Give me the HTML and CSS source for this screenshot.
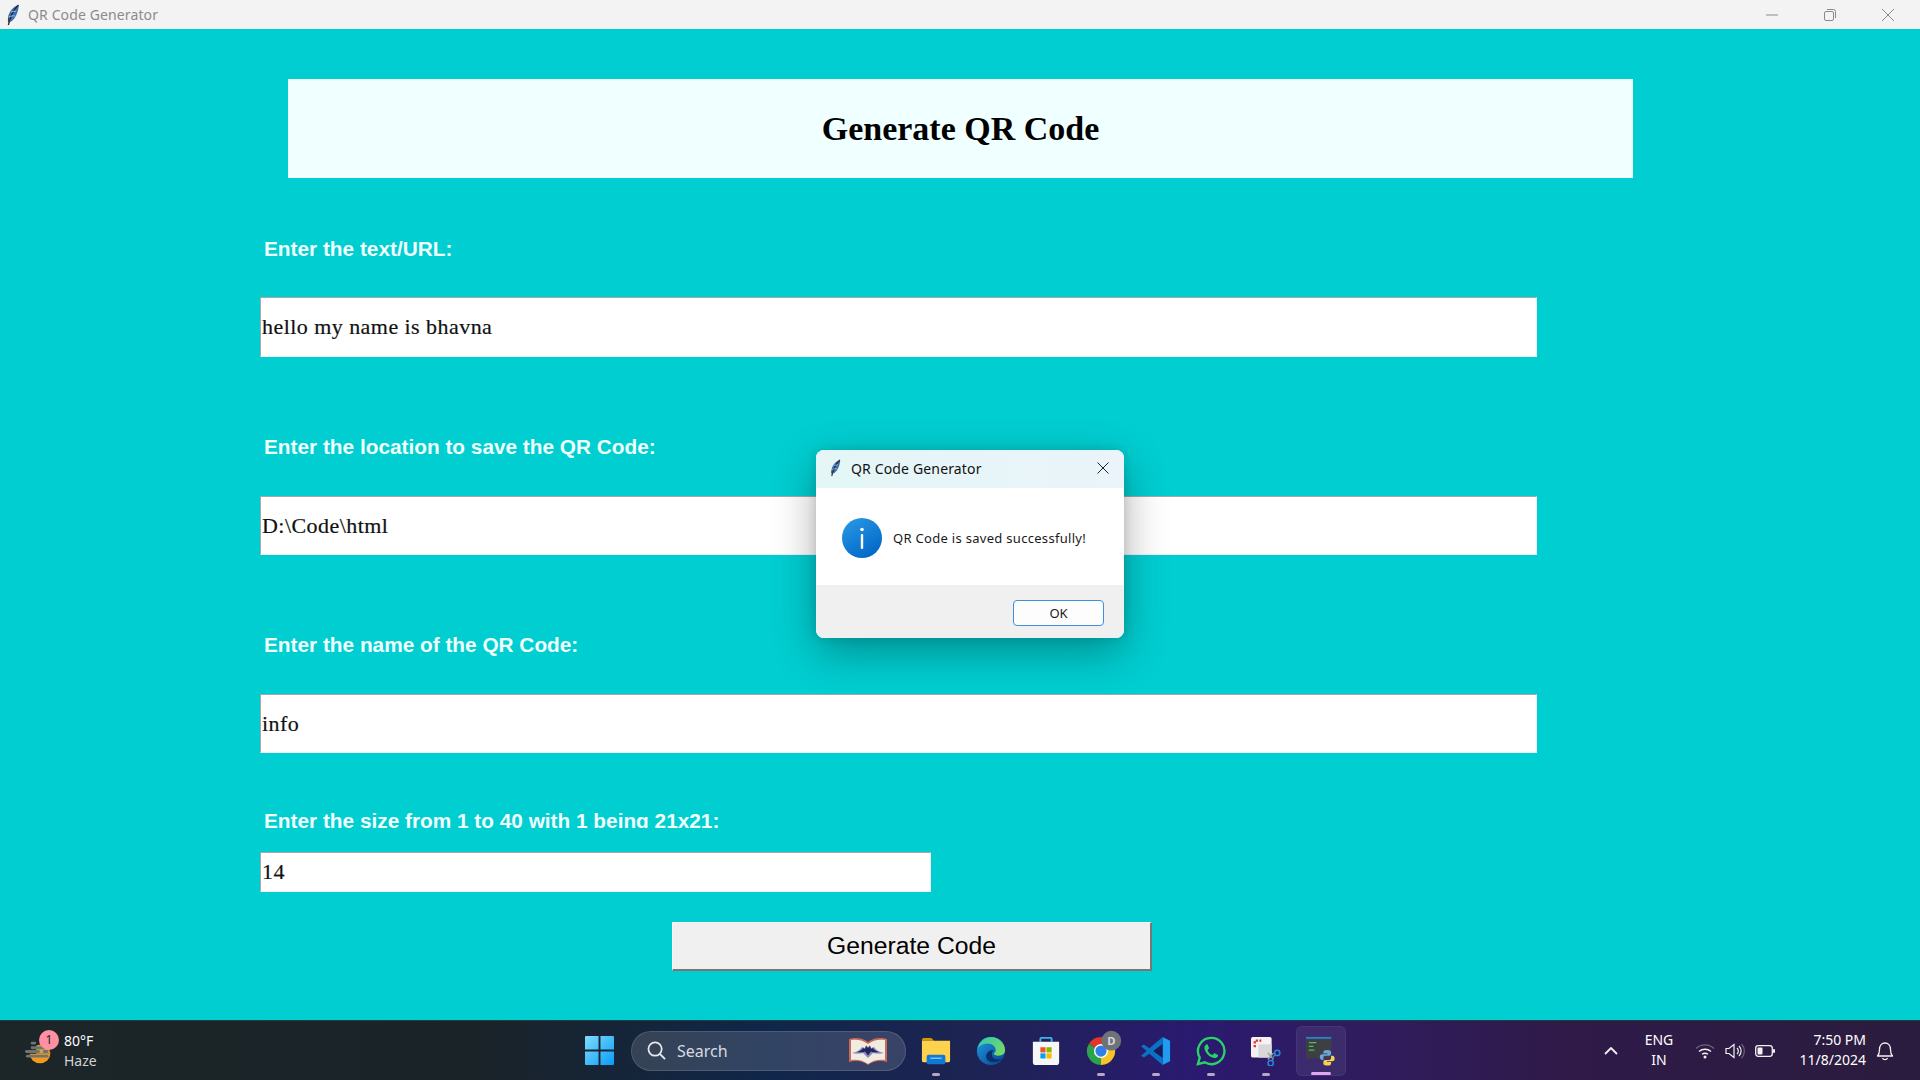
FILE: index.html
```html
<!DOCTYPE html>
<html lang="en">
<head>
<meta charset="utf-8">
<title>QR Code Generator</title>
<link rel="stylesheet" href="styles.css">
</head>
<body>
<svg class="defs" width="0" height="0">
  <defs>
    <symbol id="feather" viewBox="0 0 16 22">
      <path d="M13.5 1C8 2.500 3.500 8 3 14c-.2 2 0 3.500.6 4.500C8 17.500 11 13 12.500 8 13.300 5.500 14 3 13.500 1z" fill="#3f6fae"/>
      <path d="M13.500 1C9 5 5.500 11 3.400 21" fill="none" stroke="#1c2530" stroke-width="1.300"/>
      <path d="M4 13c2-1 4-1.500 6-1M6 8c1.500-.5 3-.8 5-.8" fill="none" stroke="#9cc0ea" stroke-width="1"/>
      <path d="M3 14c-.2 2 0 3.500.6 4.500L5 17C4.500 15 4 14 3 14z" fill="#444"/>
    </symbol>
  </defs>
</svg>

<header class="titlebar">
  <svg class="feather"><use href="#feather"/></svg>
  <span class="titlebar-text">QR Code Generator</span>
  <div class="wincontrols">
    <svg class="winbtn" viewBox="0 0 14 14"><path d="M1 7h12" stroke="#8a8a8a" fill="none"/></svg>
    <svg class="winbtn" viewBox="0 0 14 14"><rect x="1.500" y="3.500" width="9" height="9" rx="1.500" stroke="#8a8a8a" fill="none"/><path d="M4 1.500h6.500a2 2 0 0 1 2 2V10" stroke="#8a8a8a" fill="none"/></svg>
    <svg class="winbtn" viewBox="0 0 14 14"><path d="M1 1l12 12M13 1L1 13" stroke="#8a8a8a" fill="none"/></svg>
  </div>
</header>

<main class="app">
  <h1 class="banner">Generate QR Code</h1>
  <div class="label first">Enter the text/URL:</div>
  <div class="field tall-a">hello my name is bhavna</div>
  <div class="label">Enter the location to save the QR Code:</div>
  <div class="field tall-b">D:\Code\html</div>
  <div class="label">Enter the name of the QR Code:</div>
  <div class="field tall-b">info</div>
  <div class="label clipped">Enter the size from 1 to 40 with 1 being 21x21:</div>
  <div class="field short">14</div>
  <div class="generate">Generate Code</div>

  <section class="dialog">
    <div class="dialog-title">
      <svg class="dialog-feather"><use href="#feather"/></svg>
      <span class="dialog-title-text">QR Code Generator</span>
      <svg class="dialog-close" viewBox="0 0 12 12"><path d="M.5.500l11 11M11.500.500l-11 11" stroke="#222" fill="none" stroke-width="1"/></svg>
    </div>
    <div class="dialog-body">
      <svg class="info" viewBox="0 0 40 40">
        <defs><linearGradient id="infog" x1="0" y1="0" x2="0.600" y2="1"><stop offset="0" stop-color="#2b9be6"/><stop offset="1" stop-color="#0369c9"/></linearGradient></defs>
        <circle cx="20" cy="20" r="20" fill="url(#infog)"/>
        <rect x="18.800" y="16" width="2.400" height="15" rx="1" fill="#fff"/>
        <circle cx="20" cy="11.500" r="1.800" fill="#fff"/>
      </svg>
      <span class="dialog-msg">QR Code is saved successfully!</span>
    </div>
    <div class="dialog-foot"><div class="ok">OK</div></div>
  </section>
</main>

<footer class="taskbar">
  <div class="widget">
    <div class="weather">
      <svg class="weather-icon" viewBox="0 0 32 32">
        <path d="M5 19a11 10 0 0 0 22 0z" fill="#f39a1c"/>
        <path d="M12 10a11 10 0 0 1 15 9H12z" fill="#d9a13a"/>
        <g fill="#6f7472"><rect x="6" y="6" width="6" height="3" rx="1.500"/><rect x="6" y="11" width="16" height="3" rx="1.500"/><rect x="0" y="15" width="16" height="3" rx="1.500"/><rect x="19" y="15" width="6" height="3" rx="1.500"/><rect x="1" y="20" width="24" height="3" rx="1.500"/></g>
      </svg>
      <span class="weather-badge">1</span>
    </div>
    <div class="weather-text"><span class="temp">80°F</span><span class="cond">Haze</span></div>
  </div>

  <div class="center">
    <svg class="startlogo" viewBox="0 0 30 30">
      <defs><linearGradient id="wing" x1="0" y1="0" x2="1" y2="1"><stop offset="0" stop-color="#7fdcff"/><stop offset="1" stop-color="#0a9bf5"/></linearGradient></defs>
      <path fill="url(#wing)" d="M1 0h13v14H0V1a1 1 0 0 1 1-1zM16 0h13a1 1 0 0 1 1 1v13H16zM0 16h14v14H1a1 1 0 0 1-1-1zM16 16h14v13a1 1 0 0 1-1 1H16z"/>
    </svg>
    <div class="search">
      <svg class="search-icon" viewBox="0 0 20 20"><circle cx="8.500" cy="8.500" r="7" fill="none" stroke="#e8e8ee" stroke-width="1.800"/><path d="M13.500 13.500l5.500 5.500" stroke="#e8e8ee" stroke-width="2"/></svg>
      <span class="search-text">Search</span>
      <svg class="search-book" viewBox="0 0 40 30">
        <path d="M1 3c7-2 14-1 19 3 5-4 12-5 19-3v23c-7-2-14-1-19 3-5-4-12-5-19-3z" fill="#c9695a"/>
        <path d="M3 4c6-1 12 0 17 4 5-4 11-5 17-4v20c-6-1-12 0-17 4-5-4-11-5-17-4z" fill="#f2ece0"/>
        <path d="M4 17c5-1 8-3 10-6l3 1 1-3 2 2 2-2 1 3 3-1c2 3 5 5 10 6-4 1-8 1-11 0l-5 5-5-5c-3 1-7 1-11 0z" fill="#8f8ac0"/>
        <path d="M9 16c3-1 5-2 6-4l2 1 1-3 2 2 2-2 1 3 2-1c1 2 3 3 6 4-3 .5-6 .5-8-.5l-3 4-3-4c-2 1-5 1-8 .5z" fill="#23265c"/>
      </svg>
    </div>
    <div class="app-cell dotted">
      <svg class="app-icon" viewBox="0 0 32 32">
        <path d="M1 4a2 2 0 0 1 2-2h8l3 3h-13z" fill="#d69a00"/>
        <path d="M1 5h30v21a2 2 0 0 1-2 2H3a2 2 0 0 1-2-2z" fill="#ffd24d"/>
        <rect x="6" y="20" width="20" height="10" rx="2" fill="#0f7ad6"/>
        <rect x="10" y="23" width="12" height="1.500" fill="#7cc6ff"/>
      </svg>
    </div>
    <div class="app-cell">
      <svg class="app-icon" viewBox="0 0 32 32">
        <defs>
          <linearGradient id="edge1" x1="0" y1="0" x2="1" y2="1"><stop offset="0" stop-color="#34c7b0"/><stop offset="1" stop-color="#7fdc5a"/></linearGradient>
          <linearGradient id="edge2" x1="0" y1="0" x2="1" y2="1"><stop offset="0" stop-color="#1b9de2"/><stop offset="1" stop-color="#0c3f8c"/></linearGradient>
        </defs>
        <circle cx="16" cy="16" r="15" fill="url(#edge2)"/>
        <path d="M2 13C4 5 10 1 16 1c8 0 15 6 15 14 0 4-3 6-7 6-3 0-5-1-5-2 0-1 2-1 2-4 0-4-4-7-8-7-5 0-9 2-11 5z" fill="url(#edge1)"/>
        <path d="M18 28c-5 0-8-4-7-8 1-3 4-5 8-5-2 2-3 5-1 8 2 2 6 3 10 1-2 3-6 4-10 4z" fill="#0a2f6e"/>
      </svg>
    </div>
    <div class="app-cell">
      <svg class="app-icon" viewBox="0 0 32 32">
        <path d="M10 6V3a1 1 0 0 1 1-1h10a1 1 0 0 1 1 1v3" fill="none" stroke="#3ab3ee" stroke-width="2"/>
        <path d="M2 6h28v22a3 3 0 0 1-3 3H5a3 3 0 0 1-3-3z" fill="#f7f7f7"/>
        <rect x="10" y="12" width="5.500" height="5.500" fill="#f25022"/>
        <rect x="16.500" y="12" width="5.500" height="5.500" fill="#7fba00"/>
        <rect x="10" y="18.500" width="5.500" height="5.500" fill="#00a4ef"/>
        <rect x="16.500" y="18.500" width="5.500" height="5.500" fill="#ffb900"/>
      </svg>
    </div>
    <div class="app-cell dotted">
      <svg class="app-icon chrome" viewBox="0 0 32 32">
        <path d="M16 16L3 8.500A15 15 0 0 1 29 8.500z" fill="#e0352b"/>
        <path d="M16 16L29 8.500A15 15 0 0 1 16 31z" fill="#f7c325"/>
        <path d="M16 16L16 31A15 15 0 0 1 3 8.500z" fill="#2ba24c"/>
        <circle cx="16" cy="16" r="7.500" fill="#fff"/>
        <circle cx="16" cy="16" r="6" fill="#2f7fe8"/>
        <circle cx="27" cy="5" r="10.500" fill="#6d7378"/>
        <text class="chrome-d" x="27" y="9.500" text-anchor="middle">D</text>
      </svg>
    </div>
    <div class="app-cell dotted">
      <svg class="app-icon" viewBox="0 0 32 32">
        <path d="M23 1l8 4v22l-8 4z" fill="#1f9cf0"/>
        <path d="M23 1v30L9 19l-6 4-3-2 6-5-6-5 3-2 6 4z" fill="#0a72c4"/>
        <path d="M23 8.500L13 16l10 7.500z" fill="#1d1a5c"/>
      </svg>
    </div>
    <div class="app-cell dotted">
      <svg class="app-icon" viewBox="0 0 32 32">
        <path d="M16 2a14 14 0 0 0-12 21l-2 7 7.300-1.900A14 14 0 1 0 16 2z" fill="none" stroke="#28d366" stroke-width="2.500"/>
        <path d="M11 9c-1 .3-2 2-2 3.500 0 5 6 11 11 11 1.500 0 3-1 3.500-2.300.2-.7 0-1-.5-1.300l-3-1.500c-.5-.2-.8 0-1 .3l-1 1.300c-.3.300-.6.300-1 .1-2-1-3.500-2.500-4.500-4.500-.2-.4-.1-.7.200-1l1-1.200c.2-.3.300-.6.100-1l-1.300-3c-.2-.5-.8-.6-1.500-.4z" fill="#28d366"/>
      </svg>
    </div>
    <div class="app-cell dotted">
      <svg class="app-icon" viewBox="0 0 32 32">
        <rect x="0" y="1" width="22" height="22" rx="2" fill="#f4f2f2"/>
        <path d="M4 12V5h7" fill="none" stroke="#d9362c" stroke-width="2.500" stroke-dasharray="2.500 1.500"/>
        <path d="M8 9h14v14H8z" fill="#d8d8d8"/>
        <path d="M18 18l6 7M24 18l-6 7" stroke="#9a9a9a" stroke-width="1.500"/>
        <circle cx="28" cy="18" r="2.800" fill="none" stroke="#2a86d8" stroke-width="1.600"/>
        <circle cx="21" cy="29" r="2.800" fill="none" stroke="#2a86d8" stroke-width="1.600"/>
        <path d="M26 20l-3 3M22.500 27l1-3" stroke="#2a86d8" stroke-width="1.600"/>
      </svg>
    </div>
    <div class="app-cell active">
      <svg class="app-icon" viewBox="0 0 32 32">
        <rect x="0" y="1" width="27" height="23" fill="#3d4043"/>
        <rect x="0" y="1" width="27" height="2" fill="#2a7fc9"/>
        <path d="M3 7h8M3 11h5M3 15h6" stroke="#4fbe5a" stroke-width="1.200"/>
        <g transform="translate(8 9) scale(.75)">
          <path d="M19 8c-4 0-5 1.500-5 3v2h6v1h-8c-2 0-3 1.500-3 4s1 4 3 4h2v-3c0-2 1-3 3-3h5c2 0 3-1 3-3v-2c0-2-2-3-6-3z" fill="#6aa7d8"/>
          <path d="M20 30c4 0 5-1.500 5-3v-2h-6v-1h8c2 0 3-1.500 3-4s-1-4-3-4h-2v3c0 2-1 3-3 3h-5c-2 0-3 1-3 3v2c0 2 2 3 6 3z" fill="#f5d251"/>
        </g>
      </svg>
    </div>
  </div>

  <div class="tray">
    <svg class="tray-chevron" viewBox="0 0 14 8"><path d="M1 7l6-6 6 6" fill="none" stroke="#f2f2f2" stroke-width="1.800"/></svg>
    <div class="lang"><span>ENG</span><span>IN</span></div>
    <div class="tray-icons">
      <svg class="tray-icon" viewBox="0 0 20 16"><path d="M1 5.500a13 13 0 0 1 18 0" fill="none" stroke="#6e6480" stroke-width="1.300"/><path d="M4 8.500a9 9 0 0 1 12 0M7 11.300a5 5 0 0 1 6 0" fill="none" stroke="#f2f2f2" stroke-width="1.400"/><circle cx="10" cy="14" r="1.500" fill="#f2f2f2"/></svg>
      <svg class="tray-icon" viewBox="0 0 20 16"><path d="M1 5.500h3l5-4v13l-5-4H1z" fill="none" stroke="#f2f2f2" stroke-width="1.200"/><path d="M12 5a4 4 0 0 1 0 6M14 3a7 7 0 0 1 0 10" fill="none" stroke="#f2f2f2" stroke-width="1.200"/><path d="M16.500 1a10 10 0 0 1 0 14" fill="none" stroke="#6e6480" stroke-width="1.200"/></svg>
      <svg class="tray-icon" viewBox="0 0 20 16"><rect x=".7" y="2.700" width="16.600" height="10.600" rx="2.500" fill="none" stroke="#f2f2f2" stroke-width="1.300"/><rect x="2.500" y="4.500" width="5" height="7" rx="1" fill="#f2f2f2"/><rect x="18" y="6" width="2" height="4" rx="1" fill="#f2f2f2"/></svg>
    </div>
    <div class="clock"><span>7:50 PM</span><span>11/8/2024</span></div>
    <svg class="bell" viewBox="0 0 18 20"><path d="M1.500 15c1.500-1.500 2-3 2-6.500C3.500 4.500 6 2 9 2s5.500 2.500 5.500 6.500c0 3.500.5 5 2 6.500z" fill="none" stroke="#f2f2f2" stroke-width="1.300" stroke-linejoin="round"/><path d="M6.500 17a2.700 2.700 0 0 0 5 0" fill="none" stroke="#f2f2f2" stroke-width="1.300"/></svg>
  </div>
</footer>
</body>
</html>
```

FILE: styles.css
```css
* { box-sizing: border-box; }
html, body { margin: 0; padding: 0; }
body { width: 1920px; height: 1080px; overflow: hidden; display: flex; flex-direction: column; font-family: "Noto Sans", sans-serif; background: #00ced1; }
.defs { position: absolute; }

.titlebar { height: 29px; flex: none; display: flex; align-items: center; background: #f3f3f3; padding-left: 5px; }
.feather { width: 16px; height: 22px; }
.titlebar-text { margin-left: 7px; font-size: 14px; letter-spacing: .12px; color: #8b8b8b; }
.wincontrols { margin-left: auto; display: flex; gap: 44px; padding-right: 25px; }
.winbtn { width: 14px; height: 14px; }

.app { position: relative; flex: 1; min-height: 0; overflow: hidden; padding-left: 260px; background: #00ced1; }
.banner { margin: 50px 0 0 28px; width: 1345px; height: 99px; background: #f0ffff; display: flex; align-items: center; justify-content: center; font: bold 34px "Liberation Serif", serif; color: #000; }
.label { margin-top: 75px; margin-left: 4px; height: 30px; font: bold 20.8px/30px "Liberation Sans", sans-serif; color: #f0ffff; }
.label.first { margin-top: 56px; }
.label.clipped { margin-top: 53px; height: 22px; overflow: hidden; }
.field { margin-top: 34px; width: 1277px; background: #fff; border-top: 1px solid #a8a8a8; border-left: 1px solid #a8a8a8; border-bottom: 1px solid #eef; border-right: 1px solid #eef; padding-left: 1px; display: flex; align-items: center; font: 22px "Liberation Serif", serif; letter-spacing: .45px; color: #111; -webkit-text-stroke: .2px #111; }
.tall-a { height: 60px; margin-top: 33px; }
.tall-b { height: 59px; }
.short { height: 40px; width: 671px; margin-top: 24px; }
.generate { margin: 30px 0 0 412px; width: 480px; height: 49px; background: #f0f0f0; border: 1px solid #fff; border-right: 2px solid #777; border-bottom: 2px solid #777; display: flex; align-items: center; justify-content: center; font: 24.7px "Liberation Sans", sans-serif; color: #000; }

.dialog { position: absolute; left: 816px; top: 421px; width: 308px; height: 188px; border-radius: 8px; overflow: hidden; display: flex; flex-direction: column; background: #fff; box-shadow: 0 14px 44px rgba(0,0,0,.32), 0 0 10px rgba(0,0,0,.12); }
.dialog-title { height: 38px; flex: none; display: flex; align-items: center; padding: 0 0 2px 13px; background: linear-gradient(90deg, #e4f6f6, #eaf4fa); }
.dialog-feather { width: 13px; height: 20px; }
.dialog-title-text { margin-left: 9px; font-size: 14px; letter-spacing: .15px; color: #111; }
.dialog-close { width: 12px; height: 12px; margin-left: auto; margin-right: 15px; }
.dialog-body { flex: 1; display: flex; align-items: center; padding: 2px 0 0 26px; background: #fff; }
.info { width: 40px; height: 40px; flex: none; }
.dialog-msg { margin-left: 11px; font-size: 13px; color: #1a1a1a; letter-spacing: .3px; }
.dialog-foot { height: 53px; flex: none; display: flex; align-items: center; justify-content: flex-end; padding: 2px 20px 0 0; background: #f0f0f0; }
.ok { width: 91px; height: 26px; display: flex; align-items: center; justify-content: center; background: #fdfdfd; border: 1.500px solid #3f8fdc; border-radius: 4px; font-size: 13px; color: #1a1a1a; }

.taskbar { height: 60px; flex: none; display: flex; align-items: center; position: relative; border-top: 1px solid #20403f; color: #fff; background: linear-gradient(90deg, #1c2527 0%, #1a2328 25%, #10264a 40%, #1c2452 50%, #2a1a70 62%, #301c5c 72%, #2f1a48 82%, #2a1c3e 100%); }
.widget { width: 585px; flex: none; display: flex; align-items: center; padding-left: 25px; }
.weather { position: relative; width: 30px; height: 32px; }
.weather-icon { width: 30px; height: 32px; }
.weather-badge { position: absolute; left: 14px; top: -5px; width: 20px; height: 20px; border-radius: 50%; background: #ff8fa3; color: #222; font-size: 12px; line-height: 20px; text-align: center; }
.weather-text { margin-left: 9px; display: flex; flex-direction: column; font-size: 14px; line-height: 20px; }
.cond { color: #cfd2d2; }

.center { display: flex; align-items: center; }
.startlogo { width: 29px; height: 29px; flex: none; }
.search { margin-left: 17px; margin-right: 2px; width: 275px; height: 40px; border-radius: 20px; display: flex; align-items: center; padding-left: 15px; background: rgba(255,255,255,.14); border: 1px solid rgba(255,255,255,.13); }
.search-icon { width: 19px; height: 19px; flex: none; }
.search-text { margin-left: 11px; font-size: 16px; color: #d8dae0; }
.search-book { margin-left: auto; margin-right: 17px; width: 40px; height: 30px; }

.app-cell { position: relative; width: 55px; height: 50px; display: flex; align-items: center; justify-content: center; }
.app-icon { width: 30px; height: 30px; }
.chrome { overflow: visible; }
.dotted::after, .active::after { content: ""; position: absolute; bottom: 0; left: 50%; width: 8px; height: 3px; margin-left: -4px; border-radius: 2px; background: #b7a6c8; }
.active { width: 50px; margin-left: 3px; border-radius: 6px; background: rgba(255,255,255,.07); border: 1px solid rgba(255,255,255,.05); }
.active::after { width: 20px; margin-left: -10px; background: #e0a6f0; }
.chrome-d { font-size: 12px; font-weight: 700; fill: #d8d8d8; }

.tray { margin-left: auto; width: 330px; display: flex; align-items: center; position: relative; }
.tray-chevron { width: 14px; height: 8px; margin-left: 14px; }
.lang { width: 40px; margin-left: 21px; padding-bottom: 1px; display: flex; flex-direction: column; align-items: center; font-size: 14px; line-height: 20px; }
.tray-icons { display: flex; align-items: center; gap: 10px; margin-left: 16px; }
.tray-icon { width: 20px; height: 16px; }
.clock { margin-left: auto; padding-bottom: 1px; display: flex; flex-direction: column; align-items: flex-end; font-size: 14px; line-height: 20px; }
.bell { width: 18px; height: 20px; margin-left: 10px; margin-right: 26px; }
```
